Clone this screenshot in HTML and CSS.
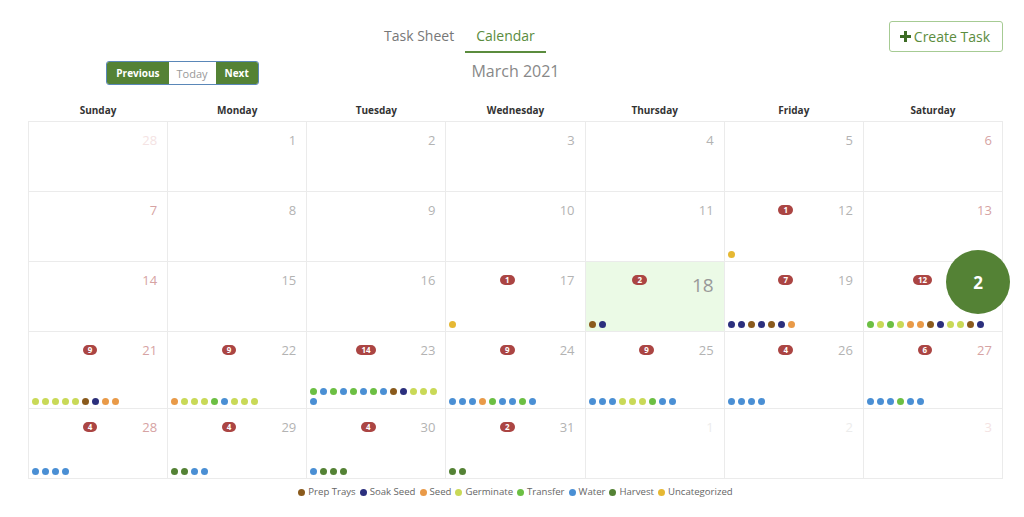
FILE: index.html
```html
<!DOCTYPE html>
<html lang="en">
<head>
	<meta charset="UTF-8">
	<title>Calendar - March 2021</title>
	<link rel="stylesheet" href="styles.css">
</head>
<body>
	<div id="wrapper">
		<div class="topbar">
			<ul class="tabs">
				<li class="tab">Task Sheet</li>
				<li class="tab active">Calendar</li>
			</ul>
			<button class="createBtn"><svg width="11" height="11" viewBox="0 0 11 11"><path d="M4 0h3v4h4v3H7v4H4V7H0V4h4z" fill="#3d6b24"/></svg>Create Task</button>
		</div>

		<div class="navRow">
			<div class="navBtns">
				<button class="btn green">Previous</button><button class="btn">Today</button><button class="btn green">Next</button>
			</div>
			<h3 class="monthTitle">March 2021</h3>
			<div></div>
		</div>

		<div class="weekdays">
			<div>Sunday</div><div>Monday</div><div>Tuesday</div><div>Wednesday</div><div>Thursday</div><div>Friday</div><div>Saturday</div>
		</div>

		<div class="calendar">
			<!-- week 1 -->
			<div class="day weekend other"><div class="dayHead"><span class="num">28</span></div></div>
			<div class="day"><div class="dayHead"><span class="num">1</span></div></div>
			<div class="day"><div class="dayHead"><span class="num">2</span></div></div>
			<div class="day"><div class="dayHead"><span class="num">3</span></div></div>
			<div class="day"><div class="dayHead"><span class="num">4</span></div></div>
			<div class="day"><div class="dayHead"><span class="num">5</span></div></div>
			<div class="day weekend"><div class="dayHead"><span class="num">6</span></div></div>

			<!-- week 2 -->
			<div class="day weekend"><div class="dayHead"><span class="num">7</span></div></div>
			<div class="day"><div class="dayHead"><span class="num">8</span></div></div>
			<div class="day"><div class="dayHead"><span class="num">9</span></div></div>
			<div class="day"><div class="dayHead"><span class="num">10</span></div></div>
			<div class="day"><div class="dayHead"><span class="num">11</span></div></div>
			<div class="day">
				<div class="dayHead"><span class="badge">1</span><span class="num">12</span></div>
				<div class="dots"><i class="dot uncat"></i></div>
			</div>
			<div class="day weekend"><div class="dayHead"><span class="num">13</span></div></div>

			<!-- week 3 -->
			<div class="day weekend"><div class="dayHead"><span class="num">14</span></div></div>
			<div class="day"><div class="dayHead"><span class="num">15</span></div></div>
			<div class="day"><div class="dayHead"><span class="num">16</span></div></div>
			<div class="day">
				<div class="dayHead"><span class="badge">1</span><span class="num">17</span></div>
				<div class="dots"><i class="dot uncat"></i></div>
			</div>
			<div class="day today">
				<div class="dayHead"><span class="badge">2</span><span class="num">18</span></div>
				<div class="dots"><i class="dot prep"></i><i class="dot soak"></i></div>
			</div>
			<div class="day">
				<div class="dayHead"><span class="badge">7</span><span class="num">19</span></div>
				<div class="dots"><i class="dot soak"></i><i class="dot soak"></i><i class="dot prep"></i><i class="dot soak"></i><i class="dot prep"></i><i class="dot soak"></i><i class="dot seed"></i></div>
			</div>
			<div class="day weekend">
				<div class="dayHead"><span class="badge">12</span><span class="num">20</span></div>
				<div class="dots"><i class="dot transfer"></i><i class="dot germ"></i><i class="dot transfer"></i><i class="dot germ"></i><i class="dot seed"></i><i class="dot seed"></i><i class="dot prep"></i><i class="dot soak"></i><i class="dot germ"></i><i class="dot germ"></i><i class="dot prep"></i><i class="dot soak"></i></div>
			</div>

			<!-- week 4 -->
			<div class="day weekend">
				<div class="dayHead"><span class="badge">9</span><span class="num">21</span></div>
				<div class="dots"><i class="dot germ"></i><i class="dot germ"></i><i class="dot germ"></i><i class="dot germ"></i><i class="dot germ"></i><i class="dot prep"></i><i class="dot soak"></i><i class="dot seed"></i><i class="dot seed"></i></div>
			</div>
			<div class="day">
				<div class="dayHead"><span class="badge">9</span><span class="num">22</span></div>
				<div class="dots"><i class="dot seed"></i><i class="dot germ"></i><i class="dot germ"></i><i class="dot germ"></i><i class="dot transfer"></i><i class="dot water"></i><i class="dot germ"></i><i class="dot germ"></i><i class="dot germ"></i></div>
			</div>
			<div class="day">
				<div class="dayHead"><span class="badge">14</span><span class="num">23</span></div>
				<div class="dots"><i class="dot transfer"></i><i class="dot water"></i><i class="dot transfer"></i><i class="dot water"></i><i class="dot transfer"></i><i class="dot water"></i><i class="dot transfer"></i><i class="dot water"></i><i class="dot prep"></i><i class="dot soak"></i><i class="dot germ"></i><i class="dot germ"></i><i class="dot germ"></i><i class="dot water"></i></div>
			</div>
			<div class="day">
				<div class="dayHead"><span class="badge">9</span><span class="num">24</span></div>
				<div class="dots"><i class="dot water"></i><i class="dot water"></i><i class="dot water"></i><i class="dot seed"></i><i class="dot transfer"></i><i class="dot water"></i><i class="dot water"></i><i class="dot transfer"></i><i class="dot water"></i></div>
			</div>
			<div class="day">
				<div class="dayHead"><span class="badge">9</span><span class="num">25</span></div>
				<div class="dots"><i class="dot water"></i><i class="dot water"></i><i class="dot water"></i><i class="dot germ"></i><i class="dot germ"></i><i class="dot germ"></i><i class="dot transfer"></i><i class="dot water"></i><i class="dot water"></i></div>
			</div>
			<div class="day">
				<div class="dayHead"><span class="badge">4</span><span class="num">26</span></div>
				<div class="dots"><i class="dot water"></i><i class="dot water"></i><i class="dot water"></i><i class="dot water"></i></div>
			</div>
			<div class="day weekend">
				<div class="dayHead"><span class="badge">6</span><span class="num">27</span></div>
				<div class="dots"><i class="dot water"></i><i class="dot water"></i><i class="dot water"></i><i class="dot transfer"></i><i class="dot water"></i><i class="dot water"></i></div>
			</div>

			<!-- week 5 -->
			<div class="day weekend">
				<div class="dayHead"><span class="badge">4</span><span class="num">28</span></div>
				<div class="dots"><i class="dot water"></i><i class="dot water"></i><i class="dot water"></i><i class="dot water"></i></div>
			</div>
			<div class="day">
				<div class="dayHead"><span class="badge">4</span><span class="num">29</span></div>
				<div class="dots"><i class="dot harvest"></i><i class="dot harvest"></i><i class="dot water"></i><i class="dot water"></i></div>
			</div>
			<div class="day">
				<div class="dayHead"><span class="badge">4</span><span class="num">30</span></div>
				<div class="dots"><i class="dot water"></i><i class="dot harvest"></i><i class="dot harvest"></i><i class="dot harvest"></i></div>
			</div>
			<div class="day">
				<div class="dayHead"><span class="badge">2</span><span class="num">31</span></div>
				<div class="dots"><i class="dot harvest"></i><i class="dot harvest"></i></div>
			</div>
			<div class="day other"><div class="dayHead"><span class="num">1</span></div></div>
			<div class="day other"><div class="dayHead"><span class="num">2</span></div></div>
			<div class="day weekend other"><div class="dayHead"><span class="num">3</span></div></div>
		</div>

		<div class="legend">
			<span><i class="dot prep"></i>Prep Trays</span>
			<span><i class="dot soak"></i>Soak Seed</span>
			<span><i class="dot seed"></i>Seed</span>
			<span><i class="dot germ"></i>Germinate</span>
			<span><i class="dot transfer"></i>Transfer</span>
			<span><i class="dot water"></i>Water</span>
			<span><i class="dot harvest"></i>Harvest</span>
			<span><i class="dot uncat"></i>Uncategorized</span>
		</div>

		<div class="counter">2</div>
	</div>
</body>
</html>
```

FILE: styles.css
```css
body {
	margin: 0;
	background-color: #fff;
	font-family: "Open Sans", "DejaVu Sans", sans-serif;
}
#wrapper {
	position: relative;
	padding: 0 21px 0 28px;
}
.topbar {
	display: flex;
	align-items: flex-start;
	padding-top: 21px;
	height: 32px;
}
.tabs {
	list-style: none;
	margin: 0 0 0 345px;
	padding: 0;
	display: flex;
}
.tab {
	padding: 5px 11px 5px;
	font-size: 14px;
	line-height: 20px;
	color: #777;
	border-bottom: 2px solid transparent;
}
.tab.active {
	color: #5b8c3e;
	border-bottom-color: #5b8c3e;
}
.createBtn {
	margin-left: auto;
	height: 31px;
	display: flex;
	align-items: center;
	gap: 3px;
	padding: 0 12px 0 10px;
	border: 1px solid #a6cb93;
	border-radius: 3px;
	background-color: #fff;
	color: #5b8c3e;
	font-family: inherit;
	font-size: 14px;
}
.navRow {
	display: grid;
	grid-template-columns: 1fr 2fr 1fr;
	margin-top: 6px;
}
.navBtns {
	justify-self: end;
	margin: 2px 13px 0 0;
	display: flex;
	height: 24px;
	box-sizing: border-box;
	border: 1px solid #5a87b8;
	border-radius: 3px;
	overflow: hidden;
}
.btn {
	border: 0;
	padding: 0 8px;
	background-color: #fff;
	color: #999;
	font-family: inherit;
	font-size: 11px;
}
.btn.green {
	padding: 0 9px;
	background-color: #548235;
	color: #fff;
	font-size: 10px;
	font-weight: bold;
}
.monthTitle {
	margin: 0;
	text-align: center;
	font-size: 16px;
	font-weight: normal;
	line-height: 24px;
	color: #888;
}
.weekdays {
	display: grid;
	grid-template-columns: repeat(7, 1fr);
	gap: 1px;
	padding: 0 1px;
	margin-top: 15px;
	font-size: 10px;
	font-weight: bold;
	line-height: 21px;
	text-align: center;
	color: #333;
}
.calendar {
	display: grid;
	grid-template-columns: repeat(7, 1fr);
	gap: 1px;
	padding: 1px;
	background-color: #ebebeb;
}
.day {
	display: flex;
	flex-direction: column;
	box-sizing: border-box;
	min-height: 69px;
	padding: 8px 3px 3px;
	background-color: #fff;
}
.dayHead {
	display: flex;
	justify-content: flex-end;
	align-items: flex-start;
	gap: 45px;
	height: 20px;
	padding-right: 7px;
	margin-bottom: 28px;
}
.num {
	font-size: 13px;
	line-height: 20px;
	color: #b3b3b3;
}
.weekend .num {
	color: #d6a3a3;
}
.other .num {
	color: #ececec;
}
.other.weekend .num {
	color: #f4e3e3;
}
.today {
	background-color: #ebfae6;
}
.today .num {
	margin-top: 5px;
	font-size: 19px;
	color: #999;
}
.badge {
	margin-top: 5px;
	height: 10px;
	padding: 0 5px;
	border-radius: 5px;
	background-color: #ab4543;
	color: #fff;
	font-size: 8px;
	font-weight: bold;
	line-height: 10px;
}
.dots {
	margin-top: auto;
	display: flex;
	flex-wrap: wrap;
	gap: 3px;
}
.dot {
	display: block;
	width: 7px;
	height: 7px;
	border-radius: 50%;
}
.prep { background-color: #8a5a1c; }
.soak { background-color: #2b2f7d; }
.seed { background-color: #e99a48; }
.germ { background-color: #c9d957; }
.transfer { background-color: #6cbf43; }
.water { background-color: #4a8fd4; }
.harvest { background-color: #548235; }
.uncat { background-color: #e6b833; }
.legend {
	display: flex;
	justify-content: center;
	gap: 4px;
	margin-top: 3px;
	font-size: 9.6px;
	line-height: 20px;
	color: #666;
}
.legend span {
	display: flex;
	align-items: center;
	gap: 3px;
}
.counter {
	position: absolute;
	left: 946px;
	top: 250px;
	width: 64px;
	height: 64px;
	border-radius: 50%;
	background-color: #548235;
	color: #fff;
	display: flex;
	align-items: center;
	justify-content: center;
	font-size: 17px;
	font-weight: bold;
}
```
